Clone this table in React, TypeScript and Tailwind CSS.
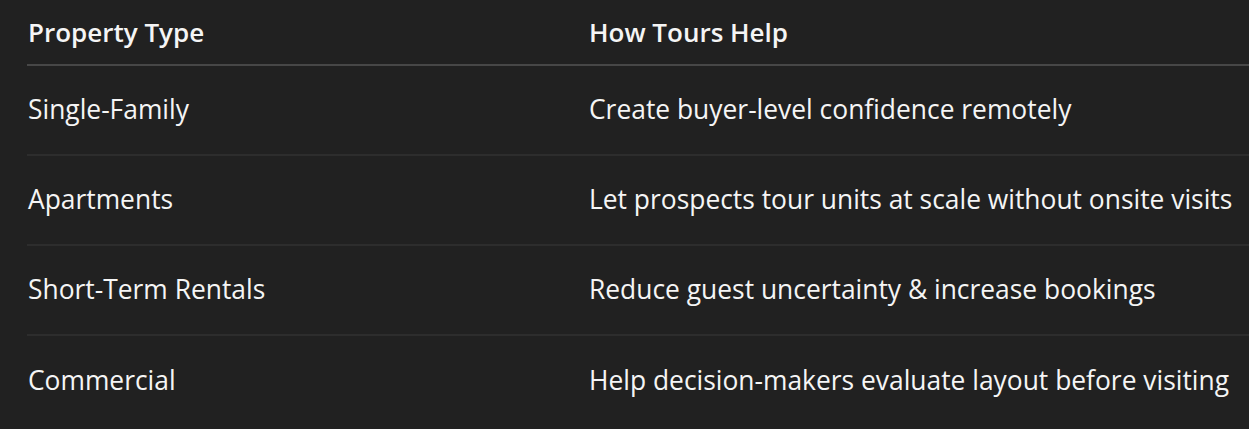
import React from "react";

const rows = [
  ["Single-Family", "Create buyer-level confidence remotely"],
  ["Apartments", "Let prospects tour units at scale without onsite visits"],
  ["Short-Term Rentals", "Reduce guest uncertainty & increase bookings"],
  ["Commercial", "Help decision-makers evaluate layout before visiting"],
];

export default function App() {
  return (
    <div
      className="w-[1249px] h-[429px] bg-[#212121] text-[#f5f5f5] pl-[27px] overflow-hidden"
      style={{ fontFamily: '"Open Sans", "Noto Sans", sans-serif' }}
    >
      <div className="grid grid-cols-[562px_1fr] h-[66px] items-center border-b-2 border-[#474747] text-[26px] font-semibold">
        <div className="pl-px">Property Type</div>
        <div>How Tours Help</div>
      </div>
      {rows.map(([a, b], i) => (
        <div
          key={a}
          className={`grid grid-cols-[562px_1fr] h-[90px] items-center text-[26.4px] ${
            i < rows.length - 1 ? "border-b-2 border-[#2d2d2d]" : ""
          }`}
        >
          <div className="pl-px">{a}</div>
          <div className="whitespace-nowrap">{b}</div>
        </div>
      ))}
    </div>
  );
}
